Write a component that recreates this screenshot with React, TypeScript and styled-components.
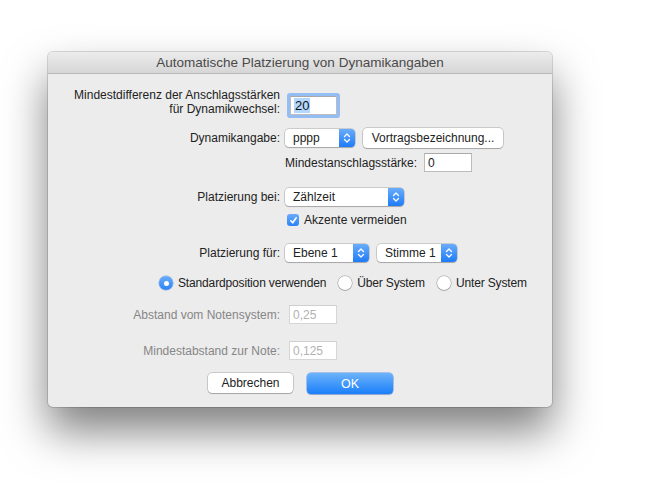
import React from 'react';
import styled, { createGlobalStyle } from 'styled-components';

const GlobalStyle = createGlobalStyle`
  html, body {
    margin: 0;
    padding: 0;
    background: #ffffff;
  }
  body {
    font-family: "Liberation Sans", Arial, sans-serif;
    font-size: 12px;
    color: #222222;
    -webkit-font-smoothing: antialiased;
  }
`;

const Page = styled.div`
  width: 651px;
  height: 503px;
  padding: 52px 0 0 48px;
  box-sizing: border-box;
  overflow: hidden;
`;

const Dialog = styled.div`
  width: 504px;
  height: 355px;
  background: #ececec;
  border-radius: 5px;
  box-shadow: 0 0 0 1px rgba(0, 0, 0, 0.14), 0 24px 44px rgba(0, 0, 0, 0.5);
  display: flex;
  flex-direction: column;
  overflow: hidden;
`;

const TitleBar = styled.div`
  height: 22px;
  flex: none;
  display: flex;
  align-items: center;
  justify-content: center;
  background: linear-gradient(#ececec, #d6d6d6);
  border-bottom: 1px solid #b8b8b8;
  color: #4a4a4a;
  font-size: 13.5px;
  box-sizing: border-box;
`;

const Body = styled.div`
  display: flex;
  flex-direction: column;
`;

const Row = styled.div<{ $gap: number; $h: number; $indent?: number }>`
  display: flex;
  align-items: center;
  margin-top: ${(p) => p.$gap}px;
  height: ${(p) => p.$h}px;
  padding-left: ${(p) => p.$indent || 0}px;
`;

const Label = styled.div<{ $disabled?: boolean }>`
  width: 232px;
  flex: none;
  text-align: right;
  line-height: 14px;
  color: ${(p) => (p.$disabled ? '#868686' : '#222222')};
  white-space: nowrap;
`;

const Controls = styled.div<{ $offset?: number; $gap?: number }>`
  display: flex;
  align-items: center;
  gap: ${(p) => p.$gap ?? 8}px;
  margin-left: ${(p) => p.$offset ?? 5}px;
  white-space: nowrap;
`;

const TextField = styled.div<{ $w: number; $focus?: boolean; $disabled?: boolean }>`
  width: ${(p) => p.$w}px;
  height: 19px;
  box-sizing: border-box;
  background: #ffffff;
  border: 1px solid ${(p) => (p.$disabled ? '#d6d6d6' : '#bcbcbc')};
  border-top-color: ${(p) => (p.$disabled ? '#cfcfcf' : '#a9a9a9')};
  color: ${(p) => (p.$disabled ? '#b2b2b2' : '#222222')};
  display: flex;
  align-items: center;
  padding-left: 3px;
  box-shadow: ${(p) => (p.$focus ? '0 0 0 3px #94bdf3' : 'none')};
  border-radius: ${(p) => (p.$focus ? '1px' : '0')};
`;

const Selected = styled.span`
  background: #b3d7ff;
  color: #111111;
  font-size: 13px;
  padding: 0 1px;
`;

const PopupBox = styled.div<{ $w: number }>`
  width: ${(p) => p.$w}px;
  height: 18px;
  box-sizing: border-box;
  background: #ffffff;
  border-radius: 4px;
  box-shadow: 0 0 0 0.5px rgba(0, 0, 0, 0.28), 0 1px 1px rgba(0, 0, 0, 0.18);
  display: flex;
  align-items: stretch;
  overflow: hidden;
`;

const PopupText = styled.div`
  flex: 1;
  padding-left: 8px;
  display: flex;
  align-items: center;
`;

const Stepper = styled.div`
  width: 16px;
  flex: none;
  background: linear-gradient(#6aacfb, #1e7cf7);
  display: flex;
  align-items: center;
  justify-content: center;
`;

const PushButton = styled.div<{ $w: number; $primary?: boolean }>`
  width: ${(p) => p.$w}px;
  height: ${(p) => (p.$primary ? 21 : 20)}px;
  box-sizing: border-box;
  border-radius: 4px;
  display: flex;
  align-items: center;
  justify-content: center;
  font-size: ${(p) => (p.$primary ? 12.5 : 12)}px;
  background: ${(p) => (p.$primary ? 'linear-gradient(#6cb3fb, #1b7ffa)' : '#ffffff')};
  color: ${(p) => (p.$primary ? '#ffffff' : '#222222')};
  box-shadow: ${(p) =>
    p.$primary
      ? '0 0 0 0.5px rgba(20, 90, 220, 0.6), 0 1px 1px rgba(0, 0, 0, 0.15)'
      : '0 0 0 0.5px rgba(0, 0, 0, 0.3), 0 1px 1px rgba(0, 0, 0, 0.18)'};
`;

const CheckBox = styled.div`
  width: 12px;
  height: 12px;
  border-radius: 3px;
  background: linear-gradient(#69aafb, #2a83f7);
  display: flex;
  align-items: center;
  justify-content: center;
  margin-left: 3px;
`;

const Option = styled.div`
  display: flex;
  align-items: center;
  gap: 5px;
  white-space: nowrap;
`;

const RadioGroup = styled.div`
  display: flex;
  align-items: center;
  gap: 12px;
  letter-spacing: -0.15px;
`;

const RadioDot = styled.div<{ $on?: boolean }>`
  width: 14px;
  height: 14px;
  flex: none;
  box-sizing: border-box;
  border-radius: 50%;
  background: ${(p) => (p.$on ? 'linear-gradient(#6aacfb, #2a83f7)' : '#ffffff')};
  box-shadow: ${(p) =>
    p.$on ? '0 0 0 0.5px rgba(30, 100, 220, 0.5)' : '0 0 0 0.5px rgba(0, 0, 0, 0.35), 0 1px 1px rgba(0, 0, 0, 0.15)'};
  display: flex;
  align-items: center;
  justify-content: center;
  &::after {
    content: '';
    display: ${(p) => (p.$on ? 'block' : 'none')};
    width: 5px;
    height: 5px;
    border-radius: 50%;
    background: #ffffff;
  }
`;

const ButtonBar = styled.div`
  display: flex;
  gap: 14px;
  padding-left: 160px;
`;

const Chevrons = () => (
  <svg width="8" height="12" viewBox="0 0 8 12">
    <path d="M1.5 4.5 L4 2 L6.5 4.5 M1.5 7.5 L4 10 L6.5 7.5" fill="none" stroke="#ffffff" strokeWidth="1.3" strokeLinecap="round" strokeLinejoin="round" />
  </svg>
);

const Popup = ({ w, children }: { w: number; children: React.ReactNode }) => (
  <PopupBox $w={w}>
    <PopupText>{children}</PopupText>
    <Stepper>
      <Chevrons />
    </Stepper>
  </PopupBox>
);

const Radio = ({ on, children }: { on?: boolean; children: React.ReactNode }) => (
  <Option>
    <RadioDot $on={on} />
    <span>{children}</span>
  </Option>
);

export default function App() {
  return (
    <>
      <GlobalStyle />
      <Page>
        <Dialog>
          <TitleBar>Automatische Platzierung von Dynamikangaben</TitleBar>
          <Body>
            <Row $gap={13} $h={30}>
              <Label>
                Mindestdifferenz der Anschlagsstärken
                <br />
                für Dynamikwechsel:
              </Label>
              <Controls $offset={10}>
                <TextField $w={47} $focus style={{ marginTop: 6 }}>
                  <Selected>20</Selected>
                </TextField>
              </Controls>
            </Row>

            <Row $gap={11} $h={20}>
              <Label>Dynamikangabe:</Label>
              <Controls>
                <Popup w={70}>pppp</Popup>
                <PushButton $w={140}>Vortragsbezeichnung...</PushButton>
              </Controls>
            </Row>

            <Row $gap={4} $h={21}>
              <Label />
              <Controls $offset={5} $gap={7}>
                <span>Mindestanschlagsstärke:</span>
                <TextField $w={48}>0</TextField>
              </Controls>
            </Row>

            <Row $gap={14} $h={20}>
              <Label>Platzierung bei:</Label>
              <Controls>
                <Popup w={119}>Zählzeit</Popup>
              </Controls>
            </Row>

            <Row $gap={5} $h={16}>
              <Label />
              <Controls $offset={4}>
                <Option>
                  <CheckBox>
                    <svg width="9" height="9" viewBox="0 0 9 9">
                      <path d="M1.8 4.8 L3.7 6.8 L7.2 1.8" fill="none" stroke="#ffffff" strokeWidth="1.6" strokeLinecap="round" strokeLinejoin="round" />
                    </svg>
                  </CheckBox>
                  <span>Akzente vermeiden</span>
                </Option>
              </Controls>
            </Row>

            <Row $gap={15} $h={20}>
              <Label>Platzierung für:</Label>
              <Controls>
                <Popup w={84}>Ebene 1</Popup>
                <Popup w={80}>Stimme 1</Popup>
              </Controls>
            </Row>

            <Row $gap={12} $h={16} $indent={111}>
              <RadioGroup>
                <Radio on>Standardposition verwenden</Radio>
                <Radio>Über System</Radio>
                <Radio>Unter System</Radio>
              </RadioGroup>
            </Row>

            <Row $gap={13} $h={21}>
              <Label $disabled>Abstand vom Notensystem:</Label>
              <Controls $offset={9}>
                <TextField $w={48} $disabled>0,25</TextField>
              </Controls>
            </Row>

            <Row $gap={15} $h={21}>
              <Label $disabled>Mindestabstand zur Note:</Label>
              <Controls $offset={9}>
                <TextField $w={48} $disabled>0,125</TextField>
              </Controls>
            </Row>

            <Row $gap={12} $h={21}>
              <ButtonBar>
                <PushButton $w={85}>Abbrechen</PushButton>
                <PushButton $w={86} $primary>OK</PushButton>
              </ButtonBar>
            </Row>
          </Body>
        </Dialog>
      </Page>
    </>
  );
}
